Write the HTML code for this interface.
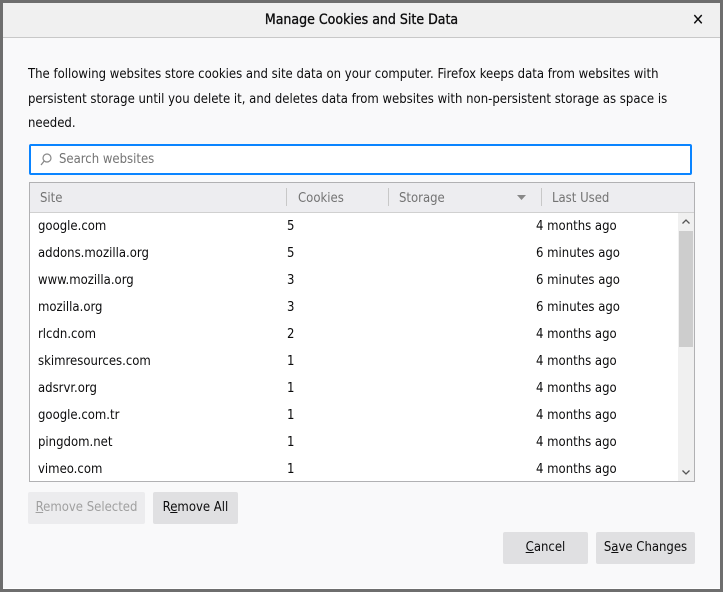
<!DOCTYPE html>
<html><head><style>
*{margin:0;padding:0;box-sizing:border-box}
body{width:723px;height:592px;background:#fff;position:relative;overflow:hidden;font-family:"DejaVu Sans Condensed","DejaVu Sans",sans-serif;font-size:13px;color:#0c0c0d}
.frame{position:absolute;left:0;top:0;width:723px;height:592px;border:3px solid #6e6e6e}
.dlg{position:absolute;left:3px;top:3px;width:717px;height:585px;background:#f9f9fa}
.title{height:35px;background:#f0f0f0;border-bottom:1px solid #c8c8c8;text-align:center;line-height:35px;font-size:14px;font-weight:normal;-webkit-text-stroke:0.3px #0c0c0d}
.x{position:absolute;right:16px;top:0;line-height:33px;font-size:16px;-webkit-text-stroke:0}
.desc{position:absolute;left:25px;top:60px;width:660px;line-height:24.5px;font-size:13px}
.search{position:absolute;left:26px;top:141px;width:663px;height:31px;border:2px solid #0a84ff;background:#fff;border-radius:2px;color:#737373;line-height:27px;padding-left:28px}
.search svg{position:absolute;left:9px;top:7px}
.tbl{position:absolute;left:26px;top:179px;width:666px;height:300px;border:1px solid #b1b1b3;background:#fff;overflow:hidden}
.hdr{height:30px;background:#ededf0;border-bottom:1px solid #d0d0d0;position:relative;color:#737373}
.hdr span{position:absolute;top:8px}
.sep{position:absolute;top:5px;width:1px;height:18px;background:#c8c8c8}
.row{height:27px;position:relative;line-height:27px}
.row span{position:absolute}
.sb{position:absolute;right:0;top:30px;width:16px;height:269px;background:#f0f0f0}
.thumb{position:absolute;left:1px;top:18px;width:14px;height:116px;background:#cdcdcd}
.btn{position:absolute;height:32px;background:#e0e0e2;border-radius:2px;text-align:center;line-height:32px}
u{text-decoration:underline}
</style></head><body>
<div class="frame"></div>
<div class="dlg">
<div class="title">Manage Cookies and Site Data<span class="x">✕</span></div>
<div class="desc">The following websites store cookies and site data on your computer. Firefox keeps data from websites with persistent storage until you delete it, and deletes data from websites with non-persistent storage as space is needed.</div>
<div class="search"><svg width="12" height="13" viewBox="0 0 12 13"><circle cx="7" cy="5" r="4" fill="none" stroke="#888" stroke-width="1.2"/><path d="M4.2 8 L1 12" stroke="#888" stroke-width="1.3"/></svg>Search websites</div>
<div class="tbl">
<div class="hdr"><span style="left:10px">Site</span><div class="sep" style="left:256px"></div><span style="left:268px">Cookies</span><div class="sep" style="left:358px"></div><span style="left:369px">Storage</span><svg style="position:absolute;left:487px;top:12px" width="9" height="5"><path d="M0 0H9L4.5 5Z" fill="#888"/></svg><div class="sep" style="left:511px"></div><span style="left:522px">Last Used</span></div>
<div class="row"><span style="left:8px">google.com</span><span style="left:257px">5</span><span style="left:506px">4 months ago</span></div>
<div class="row"><span style="left:8px">addons.mozilla.org</span><span style="left:257px">5</span><span style="left:506px">6 minutes ago</span></div>
<div class="row"><span style="left:8px">www.mozilla.org</span><span style="left:257px">3</span><span style="left:506px">6 minutes ago</span></div>
<div class="row"><span style="left:8px">mozilla.org</span><span style="left:257px">3</span><span style="left:506px">6 minutes ago</span></div>
<div class="row"><span style="left:8px">rlcdn.com</span><span style="left:257px">2</span><span style="left:506px">4 months ago</span></div>
<div class="row"><span style="left:8px">skimresources.com</span><span style="left:257px">1</span><span style="left:506px">4 months ago</span></div>
<div class="row"><span style="left:8px">adsrvr.org</span><span style="left:257px">1</span><span style="left:506px">4 months ago</span></div>
<div class="row"><span style="left:8px">google.com.tr</span><span style="left:257px">1</span><span style="left:506px">4 months ago</span></div>
<div class="row"><span style="left:8px">pingdom.net</span><span style="left:257px">1</span><span style="left:506px">4 months ago</span></div>
<div class="row"><span style="left:8px">vimeo.com</span><span style="left:257px">1</span><span style="left:506px">4 months ago</span></div>
<div class="sb"><div class="thumb"></div><svg style="position:absolute;left:4px;top:6px" width="8" height="5"><path d="M0.5 4.5L4 1L7.5 4.5" fill="none" stroke="#555" stroke-width="1.3"/></svg><svg style="position:absolute;left:4px;top:257px" width="8" height="5"><path d="M0.5 0.5L4 4L7.5 0.5" fill="none" stroke="#555" stroke-width="1.3"/></svg></div>
</div>
<div class="btn" style="left:25px;top:489px;width:117px;background:#ececee;color:#a0a0a0"><u>R</u>emove Selected</div>
<div class="btn" style="left:150px;top:489px;width:85px">R<u>e</u>move All</div>
<div class="btn" style="left:500px;top:529px;width:85px"><u>C</u>ancel</div>
<div class="btn" style="left:593px;top:529px;width:99px">S<u>a</u>ve Changes</div>
</div>
</body></html>
